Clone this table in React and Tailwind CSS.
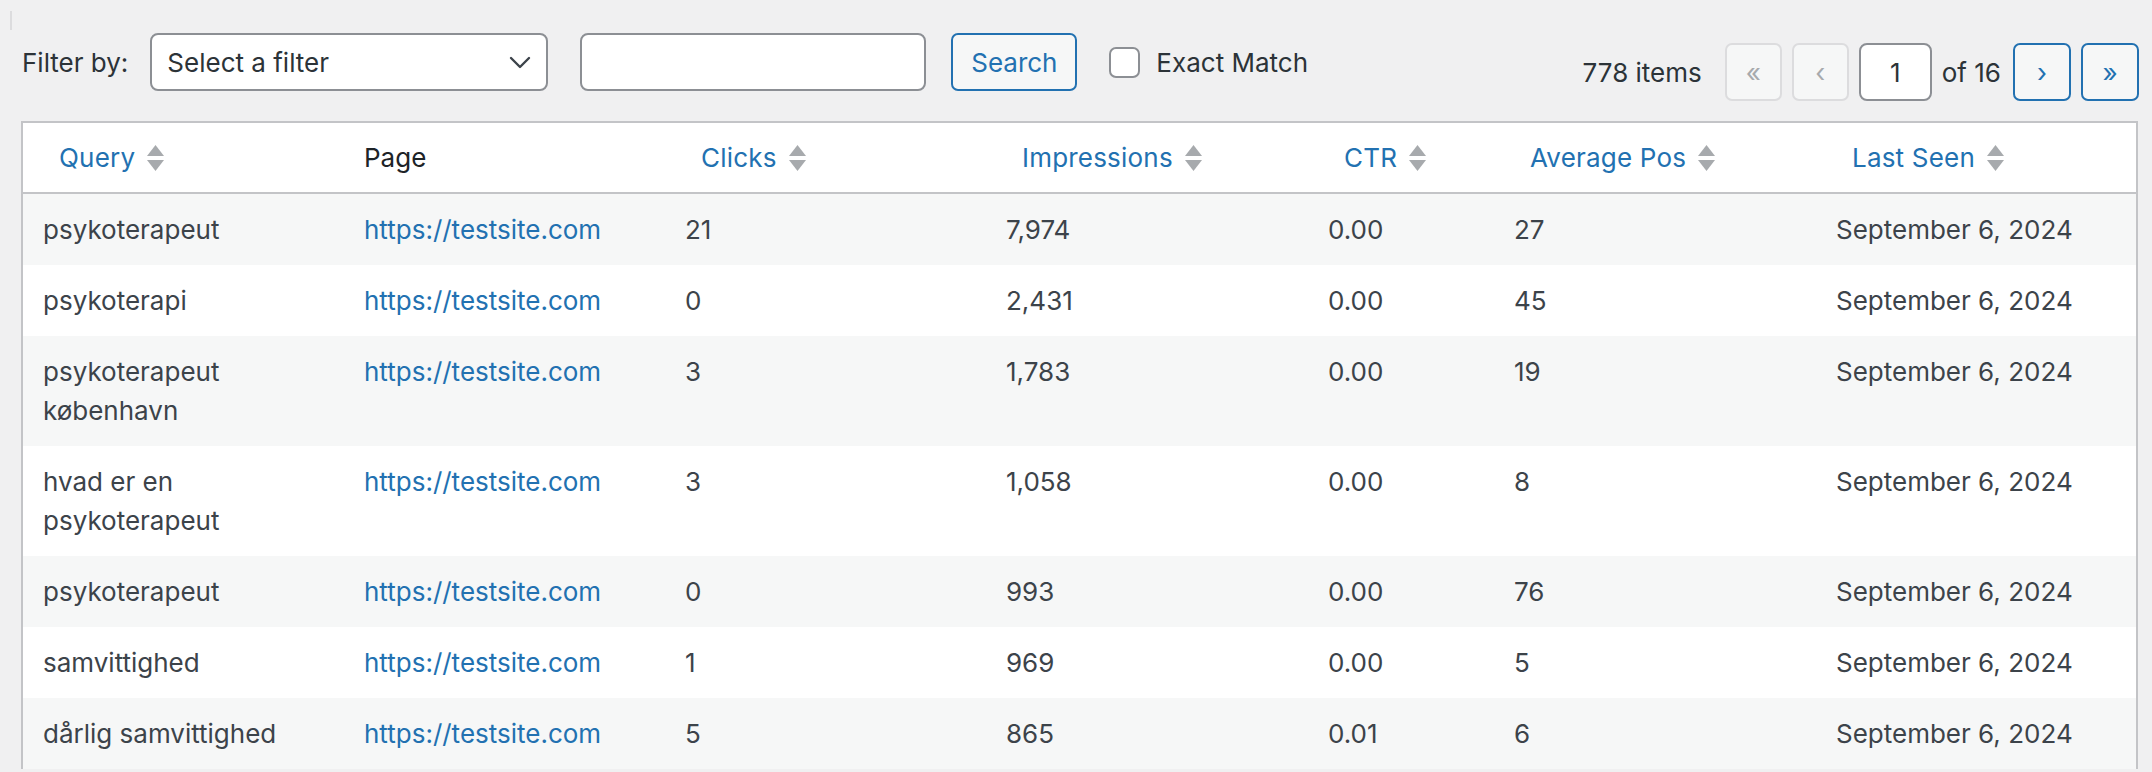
import React from "react";

const rows = [
  { query: "psykoterapeut", clicks: "21", impressions: "7,974", ctr: "0.00", pos: "27" },
  { query: "psykoterapi", clicks: "0", impressions: "2,431", ctr: "0.00", pos: "45" },
  { query: "psykoterapeut københavn", clicks: "3", impressions: "1,783", ctr: "0.00", pos: "19" },
  { query: "hvad er en psykoterapeut", clicks: "3", impressions: "1,058", ctr: "0.00", pos: "8" },
  { query: "psykoterapeut", clicks: "0", impressions: "993", ctr: "0.00", pos: "76" },
  { query: "samvittighed", clicks: "1", impressions: "969", ctr: "0.00", pos: "5" },
  { query: "dårlig samvittighed", clicks: "5", impressions: "865", ctr: "0.01", pos: "6" },
];

function SortIcon() {
  return (
    <svg width="17" height="28" viewBox="0 0 17 28" className="ml-[12px] shrink-0">
      <polygon points="0,12 8.5,1 17,12" fill="#a7aaad" />
      <polygon points="0,16 8.5,27 17,16" fill="#a7aaad" />
    </svg>
  );
}

function SortHeader({ label }) {
  return (
    <th className="pl-[36px] pr-[10px] py-[15px] text-left font-normal">
      <span className="inline-flex items-center text-[#2271b1] tracking-[0.2px]">
        {label}
        <SortIcon />
      </span>
    </th>
  );
}

export default function App() {
  return (
    <div
      className="h-[772px] overflow-hidden bg-[#f0f0f1] text-[26px] leading-[39px] text-[#3c434a]"
      style={{ fontFamily: "Inter, 'Liberation Sans', sans-serif" }}
    >
      {/* stray marker top left */}
      <div className="pt-[11px] pl-[10px]">
        <div className="w-[2px] h-[19px] bg-[#dcdcde]" />
      </div>

      {/* Top bar */}
      <div className="mt-[3px] pl-[22px] pr-[13px] flex justify-between items-start">
        <div className="flex items-center">
          <span className="text-[#2c3338]">Filter by:</span>
          <div className="ml-[22px] w-[398px] h-[58px] bg-white border-2 border-[#8c8f94] rounded-[8px] flex items-center justify-between pl-[15px] pr-[15px] text-[#2c3338]">
            <span>Select a filter</span>
            <svg width="22" height="13" viewBox="0 0 22 13" fill="none">
              <path d="M2 2 L11 11 L20 2" stroke="#3c434a" strokeWidth="2.4" strokeLinecap="round" strokeLinejoin="round" />
            </svg>
          </div>
          <div className="ml-[32px] w-[346px] h-[58px] bg-white border-2 border-[#8c8f94] rounded-[8px]" />
          <button className="ml-[25px] w-[126px] h-[58px] bg-[#f6f7f7] border-2 border-[#2271b1] rounded-[7px] text-[#2271b1]">
            Search
          </button>
          <div className="ml-[32px] w-[31px] h-[31px] bg-white border-2 border-[#8c8f94] rounded-[7px]" />
          <span className="ml-[16px] text-[#2c3338]">Exact Match</span>
        </div>

        <div className="mt-[10px] flex items-center">
          <span className="text-[#2c3338]">778 items</span>
          <div className="ml-[23px] w-[57px] h-[58px] bg-[#f6f7f7] border-2 border-[#dcdcde] rounded-[7px] flex items-center justify-center text-[#a7aaad]">
            «
          </div>
          <div className="ml-[10px] w-[57px] h-[58px] bg-[#f6f7f7] border-2 border-[#dcdcde] rounded-[7px] flex items-center justify-center text-[#a7aaad]">
            ‹
          </div>
          <div className="ml-[10px] w-[73px] h-[58px] bg-white border-2 border-[#8c8f94] rounded-[8px] flex items-center justify-center text-[#2c3338]">
            1
          </div>
          <span className="ml-[10px] text-[#2c3338]">of 16</span>
          <div className="ml-[12px] w-[58px] h-[58px] bg-[#f6f7f7] border-2 border-[#2271b1] rounded-[7px] flex items-center justify-center text-[#2271b1]">
            ›
          </div>
          <div className="ml-[10px] w-[58px] h-[58px] bg-[#f6f7f7] border-2 border-[#2271b1] rounded-[7px] flex items-center justify-center text-[#2271b1]">
            »
          </div>
        </div>
      </div>

      {/* Table */}
      <div className="mt-[20px] ml-[21px] w-[2117px] bg-white border-2 border-b-0 border-[#c3c4c7]">
        <table className="w-full table-fixed border-collapse">
          <colgroup>
            <col className="w-[321px]" />
            <col className="w-[321px]" />
            <col className="w-[321px]" />
            <col className="w-[322px]" />
            <col className="w-[186px]" />
            <col className="w-[322px]" />
            <col />
          </colgroup>
          <thead>
            <tr className="border-b-2 border-[#c3c4c7]">
              <SortHeader label="Query" />
              <th className="px-[20px] py-[15px] text-left font-normal text-[#1d2327]">Page</th>
              <SortHeader label="Clicks" />
              <SortHeader label="Impressions" />
              <SortHeader label="CTR" />
              <SortHeader label="Average Pos" />
              <SortHeader label="Last Seen" />
            </tr>
          </thead>
          <tbody>
            {rows.map((r, i) => (
              <tr key={i} className={i % 2 === 0 ? "bg-[#f6f7f7]" : "bg-white"}>
                <td className="px-[20px] py-[16px] align-top">{r.query}</td>
                <td className="px-[20px] py-[16px] align-top text-[#2271b1]">https://testsite.com</td>
                <td className="px-[20px] py-[16px] align-top">{r.clicks}</td>
                <td className="px-[20px] py-[16px] align-top">{r.impressions}</td>
                <td className="px-[20px] py-[16px] align-top">{r.ctr}</td>
                <td className="px-[20px] py-[16px] align-top">{r.pos}</td>
                <td className="px-[20px] py-[16px] align-top">September 6, 2024</td>
              </tr>
            ))}
          </tbody>
        </table>
      </div>
    </div>
  );
}
